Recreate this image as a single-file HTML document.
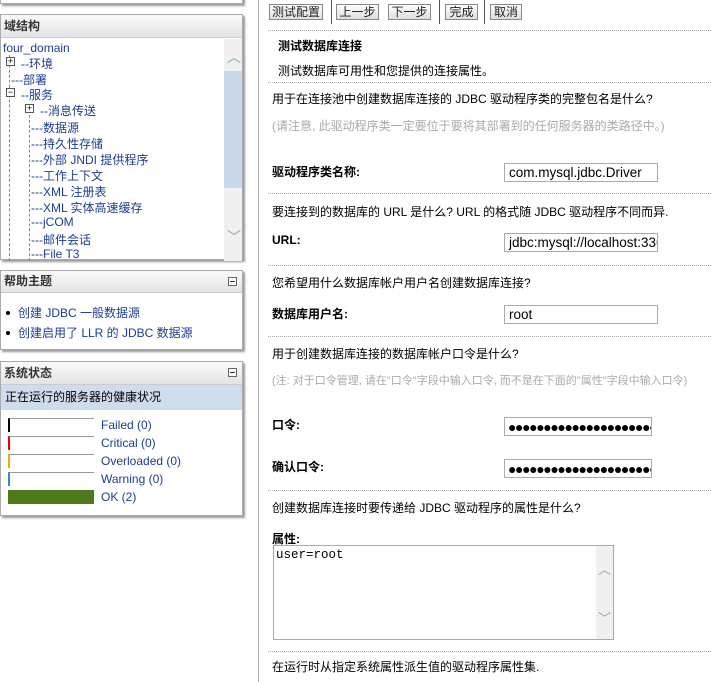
<!DOCTYPE html>
<html><head><meta charset="utf-8"><style>
*{margin:0;padding:0;box-sizing:border-box}
body{width:711px;height:682px;background:#fff;position:relative;overflow:hidden;font-family:"Liberation Sans","Noto Sans CJK SC",sans-serif;font-size:12px;color:#000}
.a{position:absolute;white-space:nowrap}
.panel{position:absolute;left:0;width:243px;background:#fff;border:1px solid #aaa;box-shadow:2px 2px 2px #999}
.hd{position:absolute;left:0;right:0;top:0;background:linear-gradient(#fafafa,#e4e4e4);border-bottom:1px solid #ccc;font-weight:bold;color:#333;padding-left:3px}
.lk{color:#1c3d94}
.min{position:absolute;right:5px;width:9px;height:9px;border:1px solid #666;background:#fff}
.min:after{content:"";position:absolute;left:1px;top:3px;width:5px;height:1px;background:#333}
.btn{position:absolute;top:4px;height:16px;border:1px solid #888;background:linear-gradient(#fff,#ddd);font-size:12px;text-align:center;line-height:14px;color:#222}
.sep{position:absolute;top:0;width:1px;height:24px;background:#555}
.dot{position:absolute;left:268px;right:0;border-top:1px dotted #aaa;height:0}
.inp{position:absolute;left:504px;width:154px;height:19px;border:1px solid #aaa;font-size:13.5px;padding:1px 4px;line-height:16px;overflow:hidden}
.pw{width:148px;font-size:14px;letter-spacing:-1.4px;padding-left:3px;line-height:17px}
.b{font-weight:bold}
.g{color:#aaa}
.box{position:absolute;width:9px;height:9px;border:1px solid #555;background:#fff;font-size:9px;line-height:7px;text-align:center}
.bar{position:absolute;left:7px;width:86px;height:14px;border-top:1px solid #999}
.bul{position:absolute;left:5px;width:4px;height:4px;background:#000;border-radius:2px}
</style></head><body>
<div class="panel" style="top:-10px;height:14px"></div>
<div class="panel" style="top:14px;height:246px">
 <div class="hd" style="height:23px;line-height:22px">域结构</div>
 <div class="a lk" style="left:2px;top:26px">four_domain</div>
 <div style="position:absolute;left:8px;top:40px;height:206px;border-left:1px dashed #888"></div>
 <div style="position:absolute;left:28px;top:100px;height:146px;border-left:1px dashed #888"></div>
 <div class="box" style="left:5px;top:42px">+</div><div class="a lk" style="left:20px;top:40px">--环境</div>
 <div class="a lk" style="left:10px;top:56px">---部署</div>
 <div class="box" style="left:5px;top:73px">−</div><div class="a lk" style="left:20px;top:71px">--服务</div>
 <div class="box" style="left:24px;top:89px">+</div><div class="a lk" style="left:39px;top:87px">--消息传送</div>
 <div class="a lk" style="left:30px;top:104px">---数据源</div>
 <div class="a lk" style="left:30px;top:120px">---持久性存储</div>
 <div class="a lk" style="left:30px;top:136px">---外部 JNDI 提供程序</div>
 <div class="a lk" style="left:30px;top:152px">---工作上下文</div>
 <div class="a lk" style="left:30px;top:168px">---XML 注册表</div>
 <div class="a lk" style="left:30px;top:184px">---XML 实体高速缓存</div>
 <div class="a lk" style="left:30px;top:200px">---jCOM</div>
 <div class="a lk" style="left:30px;top:216px">---邮件会话</div>
 <div class="a lk" style="left:30px;top:232px">---File T3</div>
 <div style="position:absolute;left:223px;top:24px;width:18px;height:222px;background:#f0f0f0"></div>
 <div style="position:absolute;left:223px;top:56px;width:18px;height:117px;background:#c9d9ec"></div>
 <div class="a" style="left:226px;top:32px;color:#8aa;font-size:14px">︿</div>
 <div class="a" style="left:226px;top:212px;color:#8aa;font-size:14px">﹀</div>
</div>
<div class="panel" style="top:270px;height:80px">
 <div class="hd" style="height:22px;line-height:21px">帮助主题</div><div class="min" style="top:6px"></div>
 <div class="bul" style="top:40px"></div><div class="a lk" style="left:17px;top:33px">创建 JDBC 一般数据源</div>
 <div class="bul" style="top:60px"></div><div class="a lk" style="left:17px;top:53px">创建启用了 LLR 的 JDBC 数据源</div>
</div>
<div class="panel" style="top:361px;height:155px">
 <div class="hd" style="height:23px;line-height:22px">系统状态</div><div class="min" style="top:6px"></div>
 <div style="position:absolute;left:0;right:0;top:23px;height:25px;background:#cfdcec;line-height:25px;padding-left:4px">正在运行的服务器的健康状况</div>
 <div class="bar" style="top:56px;border-left:2px solid #000"></div><div class="a lk" style="left:100px;top:56px">Failed (0)</div>
 <div class="bar" style="top:74px;border-left:2px solid #e00"></div><div class="a lk" style="left:100px;top:74px">Critical (0)</div>
 <div class="bar" style="top:92px;border-left:2px solid #e8b000"></div><div class="a lk" style="left:100px;top:92px">Overloaded (0)</div>
 <div class="bar" style="top:110px;border-left:2px solid #3090b0"></div><div class="a lk" style="left:100px;top:110px">Warning (0)</div>
 <div class="bar" style="top:128px;background:#4e7a1c;border-top-color:#4e7a1c"></div><div class="a lk" style="left:100px;top:128px">OK (2)</div>
</div>

<div style="position:absolute;left:258px;top:0;width:1px;height:682px;background:#aaa"></div>
<div class="btn" style="left:269px;width:54px">测试配置</div>
<div class="sep" style="left:331px"></div>
<div class="btn" style="left:336px;width:43px">上一步</div>
<div class="btn" style="left:388px;width:43px">下一步</div>
<div class="sep" style="left:439px"></div>
<div class="btn" style="left:445px;width:33px">完成</div>
<div class="sep" style="left:484px"></div>
<div class="btn" style="left:490px;width:32px">取消</div>
<div class="dot" style="top:30px"></div>
<div class="a b" style="left:278px;top:37px">测试数据库连接</div>
<div class="a" style="left:278px;top:62px">测试数据库可用性和您提供的连接属性。</div>
<div class="dot" style="top:82px"></div>
<div class="a" style="left:272px;top:90px">用于在连接池中创建数据库连接的 JDBC 驱动程序类的完整包名是什么?</div>
<div class="a g" style="left:272px;top:117px">(请注意, 此驱动程序类一定要位于要将其部署到的任何服务器的类路径中。)</div>
<div class="a b" style="left:272px;top:163px">驱动程序类名称:</div>
<div class="inp" style="top:163px">com.mysql.jdbc.Driver</div>
<div class="dot" style="top:193px"></div>
<div class="a" style="left:272px;top:203px">要连接到的数据库的 URL 是什么? URL 的格式随 JDBC 驱动程序不同而异.</div>
<div class="a b" style="left:272px;top:233px">URL:</div>
<div class="inp" style="top:233px">jdbc:mysql://localhost:3306</div>
<div class="dot" style="top:265px"></div>
<div class="a" style="left:272px;top:274px">您希望用什么数据库帐户用户名创建数据库连接?</div>
<div class="a b" style="left:272px;top:305px">数据库用户名:</div>
<div class="inp" style="top:305px">root</div>
<div class="dot" style="top:336px"></div>
<div class="a" style="left:272px;top:345px">用于创建数据库连接的数据库帐户口令是什么?</div>
<div class="a g" style="left:272px;top:372px;font-size:11px">(注: 对于口令管理, 请在"口令"字段中输入口令, 而不是在下面的"属性"字段中输入口令)</div>
<div class="a b" style="left:272px;top:416px">口令:</div>
<div class="inp pw" style="top:417px">●●●●●●●●●●●●●●●●●●●●●</div>
<div class="a b" style="left:272px;top:458px">确认口令:</div>
<div class="inp pw" style="top:459px">●●●●●●●●●●●●●●●●●●●●●</div>
<div class="dot" style="top:490px"></div>
<div class="a" style="left:272px;top:499px">创建数据库连接时要传递给 JDBC 驱动程序的属性是什么?</div>
<div class="a b" style="left:272px;top:530px">属性:</div>
<div style="position:absolute;left:273px;top:545px;width:341px;height:95px;border:1px solid #aaa">
 <div class="a" style="left:2px;top:2px;font-family:'Liberation Mono',monospace;font-size:12.5px">user=root</div>
 <div style="position:absolute;right:0;top:0;width:17px;height:93px;background:#f0f0f0"></div>
 <div class="a" style="right:2px;top:13px;color:#8aa;font-size:13px">︿</div>
 <div class="a" style="right:2px;top:62px;color:#8aa;font-size:13px">﹀</div>
</div>
<div class="dot" style="top:651px"></div>
<div class="a" style="left:272px;top:658px">在运行时从指定系统属性派生值的驱动程序属性集.</div>
</body></html>
